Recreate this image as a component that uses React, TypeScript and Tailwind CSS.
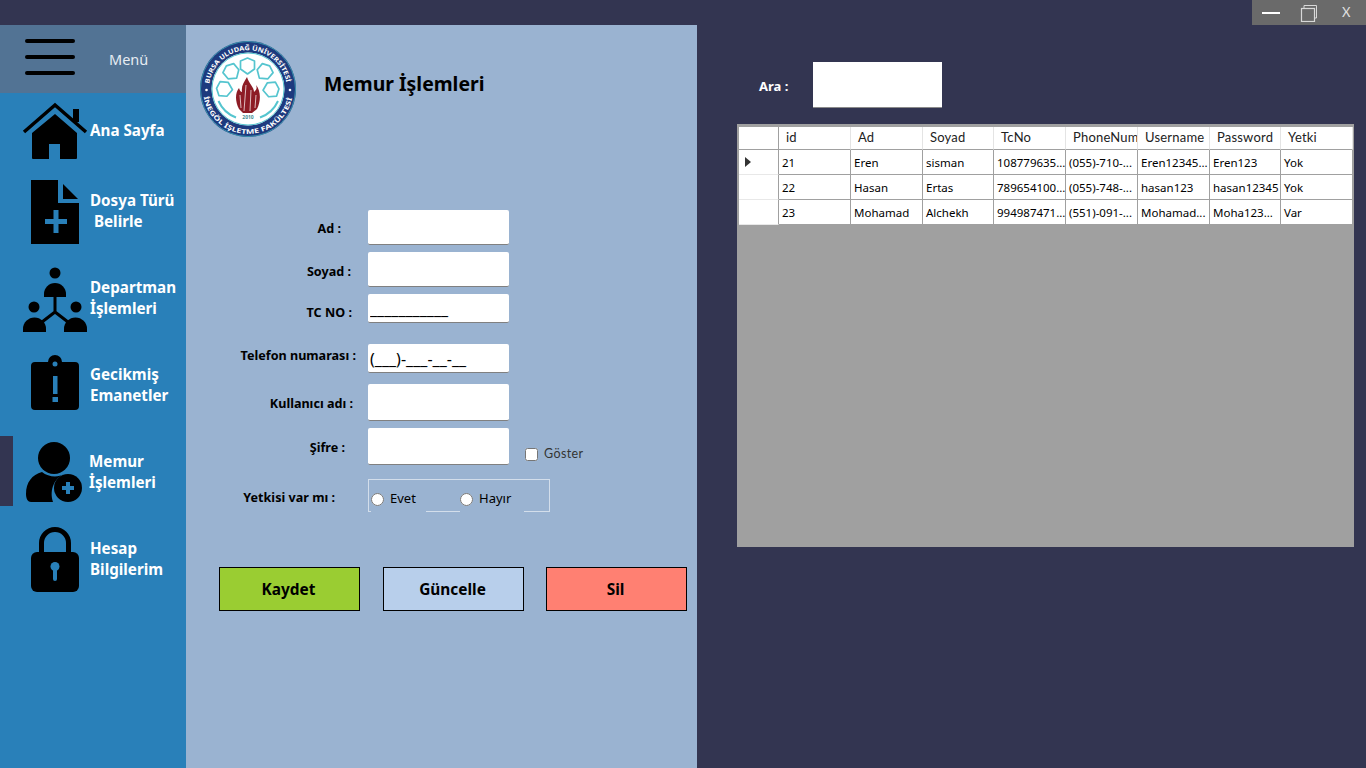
import React from "react";

const columns = ["id", "Ad", "Soyad", "TcNo", "PhoneNum", "Username", "Password", "Yetki"];

const rows = [
  ["21", "Eren", "sisman", "108779635...", "(055)-710-...", "Eren12345...", "Eren123", "Yok"],
  ["22", "Hasan", "Ertas", "789654100...", "(055)-748-...", "hasan123", "hasan12345", "Yok"],
  ["23", "Mohamad", "Alchekh", "994987471...", "(551)-091-...", "Mohamad...", "Moha123...", "Var"],
];

// x, y, rotation of the five shields round the flame in the logo
const shields = [
  [48.5, 25, 0],
  [32.5, 31, -40],
  [65.5, 31, 40],
  [25.5, 48, -85],
  [72, 48.5, 85],
];

function HomeIcon() {
  return (
    <svg width="90" height="70" viewBox="0 0 90 70" className="shrink-0">
      <path d="M24 36 55 9 86 36" fill="none" stroke="#000" strokeWidth="3.5" />
      <rect x="73" y="13" width="6" height="13" fill="#000" />
      <path d="M32 37 55 18 77 37V62a1 1 0 0 1-1 1H60V48H49V63H33a1 1 0 0 1-1-1Z" fill="#000" />
    </svg>
  );
}

function FileIcon() {
  return (
    <svg width="90" height="70" viewBox="0 0 90 70" className="shrink-0">
      <path d="M31 5H58V28H79V69H31Z" fill="#000" />
      <path d="M63 9 78 24H63Z" fill="#000" />
      <path d="M53.500 35h5v9h8.500v5h-8.500v9h-5v-9h-8.500v-5h8.500Z" fill="#2980b9" />
    </svg>
  );
}

function PeopleIcon() {
  return (
    <svg width="90" height="70" viewBox="0 0 90 70" className="shrink-0">
      <circle cx="55" cy="11" r="5.500" fill="#000" />
      <path d="M44 35V32a11 11 0 0 1 22 0V35Z" fill="#000" />
      <circle cx="34" cy="45" r="5.500" fill="#000" />
      <circle cx="76" cy="45" r="5.500" fill="#000" />
      <path d="M23 70V67a11.500 11.500 0 0 1 23 0V70Z" fill="#000" />
      <path d="M64 70V67a11.500 11.500 0 0 1 23 0V70Z" fill="#000" />
      <path d="M55 34V50M42 60 55 50 68 60" fill="none" stroke="#000" strokeWidth="3" />
    </svg>
  );
}

function NoticeIcon() {
  return (
    <svg width="90" height="70" viewBox="0 0 90 70" className="shrink-0">
      <path
        d="M35 13H48a7 7 0 0 1 14 0H75a4 4 0 0 1 4 4V57a4 4 0 0 1-4 4H35a4 4 0 0 1-4-4V17a4 4 0 0 1 4-4Z"
        fill="#000"
      />
      <circle cx="55" cy="15" r="2.500" fill="#2980b9" />
      <rect x="53" y="27" width="4.500" height="18" fill="#2980b9" />
      <rect x="52.500" y="48" width="5.500" height="5" fill="#2980b9" />
    </svg>
  );
}

function UserAddIcon() {
  return (
    <svg width="90" height="70" viewBox="0 0 90 70" className="shrink-0">
      <circle cx="54" cy="22" r="16" fill="#000" />
      <path d="M26 58C26 46 32 39 42 36 48 41 58 42 64 38 55 42 49 53 53 66H31C28 66 26 63 26 58Z" fill="#000" />
      <circle cx="68" cy="52" r="14" fill="#000" />
      <path d="M66 46h4v4h4v4h-4v4h-4v-4h-4v-4h4Z" fill="#2980b9" />
    </svg>
  );
}

function LockIcon() {
  return (
    <svg width="90" height="70" viewBox="0 0 90 70" className="shrink-0">
      <path d="M41.500 32V20a13.500 13.500 0 0 1 27 0V32" fill="none" stroke="#000" strokeWidth="5" />
      <rect x="31" y="29" width="48" height="40" rx="6" fill="#000" />
      <circle cx="55" cy="43.500" r="4.500" fill="#2980b9" />
      <path d="M53 45h4v11a2 2 0 0 1-4 0Z" fill="#2980b9" />
    </svg>
  );
}

function Logo() {
  return (
    <svg width="98" height="98" viewBox="0 0 98 98" className="shrink-0">
      <defs>
        <path id="logoTop" d="M10.400 42.600A39 39 0 0 1 87.600 42.600" />
        <path id="logoBottom" d="M4.700 55.800A45 45 0 0 0 93.300 55.800" />
      </defs>
      <circle cx="49" cy="48" r="48" fill="#1d3a7e" />
      <circle cx="49" cy="48" r="47.500" fill="none" stroke="#3fa7b8" strokeWidth="0.800" />
      <circle cx="49" cy="48" r="36.500" fill="#fff" />
      <circle cx="49" cy="48" r="36" fill="none" stroke="#55c5cf" strokeWidth="1" />
      <g fill="none" stroke="#55c5cf" strokeWidth="1.700" strokeLinejoin="round">
        {shields.map(([x, y, a]) => (
          <path key={a} transform={`translate(${x} ${y}) rotate(${a})`} d="M-7-5 0-8 7-5 7 3 0 8-7 3Z" />
        ))}
      </g>
      <path
        d="M48 36C50 43 55 46 55 51 58 48 58 47 57 44 62 50 62 60 58 68L53 72H44L40 68C36 60 36 52 40 47 41 50 42 51 43 51 42 45 45 41 48 36Z"
        fill="#8d1c25"
      />
      <path d="M47 44 45 70M52 49 51 70M41 54 42 67M57 54 56 67" stroke="#f3e5e5" strokeWidth="0.800" />
      <path d="M19.500 60A31 31 0 0 0 37 76.500M79 60A31 31 0 0 1 61 76.500" fill="none" stroke="#55c5cf" strokeWidth="2" />
      <text
        x="49"
        y="78"
        textAnchor="middle"
        fontSize="5"
        fontWeight="700"
        fill="#3f8a91"
        className="font-['Noto_Sans',sans-serif]"
      >
        2010
      </text>
      <text fontSize="6.400" fontWeight="700" fill="#fff" className="font-['Noto_Sans',sans-serif]">
        <textPath href="#logoTop" textLength="110" lengthAdjust="spacingAndGlyphs">
          BURSA ULUDAĞ ÜNİVERSİTESİ
        </textPath>
      </text>
      <text fontSize="6.400" fontWeight="700" fill="#fff" className="font-['Noto_Sans',sans-serif]">
        <textPath href="#logoBottom" textLength="124" lengthAdjust="spacingAndGlyphs">
          İNEGÖL İŞLETME FAKÜLTESİ
        </textPath>
      </text>
      <circle cx="7.500" cy="49" r="1.300" fill="#fff" />
      <circle cx="91" cy="49" r="1.300" fill="#fff" />
    </svg>
  );
}

function NavItem({
  icon,
  active,
  className,
  textClass,
  children,
}: {
  icon: React.ReactNode;
  active?: boolean;
  className?: string;
  textClass?: string;
  children: React.ReactNode;
}) {
  return (
    <div className={`relative flex h-[70px] items-center ${className ?? "mb-[17px]"}`}>
      {active && <span className="absolute left-0 top-0 h-full w-[13px] bg-[#333551]" />}
      {icon}
      <div className={`whitespace-pre text-[15.2px] font-bold leading-[21px] text-white ${textClass ?? "pt-[2px]"}`}>
        {children}
      </div>
    </div>
  );
}

function Sidebar() {
  return (
    <aside className="h-full w-[186px] shrink-0 bg-[#2980b9]">
      <div className="mb-[3px] flex h-[68px] items-center bg-[#527394]">
        <div className="mb-[4px] ml-[25px] flex w-[50px] flex-col gap-[12px]">
          <span className="h-[4px] rounded-full bg-black" />
          <span className="h-[4px] rounded-full bg-black" />
          <span className="h-[4px] rounded-full bg-black" />
        </div>
        <span className="ml-[34px] pt-[1px] text-[14.500px] text-[#e6ecf2]">Menü</span>
      </div>
      <NavItem icon={<HomeIcon />} className="mb-[9px]" textClass="pb-[2px]">
        Ana Sayfa
      </NavItem>
      <NavItem icon={<FileIcon />}>
        {"Dosya Türü\n Belirle"}
      </NavItem>
      <NavItem icon={<PeopleIcon />}>
        {"Departman\nİşlemleri"}
      </NavItem>
      <NavItem icon={<NoticeIcon />}>
        {"Gecikmiş\nEmanetler"}
      </NavItem>
      <NavItem icon={<UserAddIcon />} active>
        <span className="-ml-px block">{"Memur\nİşlemleri"}</span>
      </NavItem>
      <NavItem icon={<LockIcon />}>
        {"Hesap\nBilgilerim"}
      </NavItem>
    </aside>
  );
}

function FormRow({
  label,
  labelClass,
  inputClass,
  value,
  children,
}: {
  label: string;
  labelClass: string;
  inputClass: string;
  value?: string;
  children?: React.ReactNode;
}) {
  return (
    <div className="flex items-center">
      <label className={`w-[182px] text-right text-[12.600px] font-bold text-black ${labelClass}`}>{label}</label>
      <input
        readOnly
        value={value ?? ""}
        className={`w-[141px] rounded-[2px] border-b border-[#808080] bg-white px-[2px] text-[16px] text-black outline-none ${inputClass}`}
      />
      {children}
    </div>
  );
}

function MemurPanel() {
  return (
    <section className="h-full w-[511px] shrink-0 bg-[#9ab3d1]">
      <div className="flex items-start pl-[13px] pt-[16px]">
        <Logo />
        <h1 className="ml-[27px] mt-[28px] text-[19.400px] font-bold leading-[30px] text-black">Memur İşlemleri</h1>
      </div>

      <div className="mt-[71px] flex flex-col">
        <FormRow label="Ad :" labelClass="pr-[27px] pt-[3px]" inputClass="h-[35px]" />
        <FormRow label="Soyad :" labelClass="mt-[7px] pr-[17px] pt-[5px]" inputClass="mt-[7px] h-[35px]" />
        <FormRow label="TC NO :" labelClass="mt-[7px] pr-[16px] pt-[9px]" inputClass="mt-[7px] h-[29px] pt-[1px]" value="___________" />
        <FormRow label="Telefon numarası :" labelClass="mt-[21px] pb-[5px] pr-[12px]" inputClass="mt-[21px] h-[29px] pt-[1px]" value="(___)-___-__-__" />
        <FormRow label="Kullanıcı adı :" labelClass="mt-[11px] pr-[15px] pt-[3px]" inputClass="mt-[11px] h-[37px]" />
        <FormRow label="Şifre :" labelClass="mt-[7px] pr-[23px] pt-[3px]" inputClass="mt-[7px] h-[37px]">
          <label className="ml-[16px] mt-[23px] flex items-center gap-[6px] font-['Lato',sans-serif] text-[12.500px] tracking-[0.4px] text-[#333]">
            <input type="checkbox" className="m-0 h-[13px] w-[13px]" />
            Göster
          </label>
        </FormRow>
        <div className="mt-[14px] flex items-center">
          <label className="w-[182px] pr-[33px] pt-[5px] text-right text-[12.600px] font-bold text-black">
            Yetkisi var mı :
          </label>
          <div className="flex h-[33px] w-[182px] items-end border border-[#d3deeb] pl-[2px]">
            <label className="-mb-px flex h-[26px] w-[55px] items-center gap-[6px] bg-[#9ab3d1] text-[13px] text-black">
              <input type="radio" name="yetki" className="m-0 h-[13px] w-[13px]" />
              Evet
            </label>
            <label className="-mb-px ml-[34px] flex h-[26px] w-[64px] items-center gap-[6px] bg-[#9ab3d1] text-[13px] text-black">
              <input type="radio" name="yetki" className="m-0 h-[13px] w-[13px]" />
              Hayır
            </label>
          </div>
        </div>
      </div>

      <div className="ml-[33px] mt-[55px] flex gap-[23px] text-[15.400px] font-bold text-black">
        <button className="h-[44px] w-[141px] border border-black bg-[#9acd32] pr-[2px] pt-[1px]">Kaydet</button>
        <button className="h-[44px] w-[141px] border border-black bg-[#b8cfeb] pr-[2px] pt-[1px]">Güncelle</button>
        <button className="-ml-px h-[44px] w-[141px] border border-black bg-[#ff8072] pr-[2px] pt-[1px]">Sil</button>
      </div>
    </section>
  );
}

function DataGrid() {
  const cols = "grid-cols-[40px_72px_72px_71px_72px_72px_72px_71px_72px]";
  return (
    <div className="ml-[40px] h-[423px] w-[617px] border-[2px] border-t-[3px] border-[#a0a0a0] bg-[#a0a0a0]">
      <div className={`grid h-[23px] ${cols} bg-white font-['Lato',sans-serif] text-[13px] tracking-[0.2px] text-[#222]`}>
        <div className="border-b border-r border-[#a0a0a0]" />
        {columns.map((c) => (
          <div
            key={c}
            className="overflow-hidden whitespace-nowrap border-b border-r border-b-[#a0a0a0] border-r-[#e4e4e4] pl-[7px] leading-[21px]"
          >
            {c}
          </div>
        ))}
      </div>
      {rows.map((row, r) => (
        <div key={row[0]} className={`grid h-[25px] ${cols} bg-white text-[11.500px] text-black`}>
          <div className="flex items-center border-b border-r border-b-[#e8e8e8] border-r-[#a0a0a0] pl-[6px]">
            {r === 0 && <span className="h-0 w-0 border-y-[5px] border-l-[6px] border-y-transparent border-l-[#333]" />}
          </div>
          {row.map((cell, i) => (
            <div
              key={i}
              className="overflow-hidden whitespace-nowrap border-b border-r border-[#a0a0a0] pl-[3px] leading-[26px]"
            >
              {cell}
            </div>
          ))}
        </div>
      ))}
    </div>
  );
}

function RightPanel() {
  return (
    <section className="min-w-0 flex-1">
      <div className="flex items-center pl-[62px] pt-[37px]">
        <span className="w-[54px] pt-[4px] text-[13px] font-bold text-white">Ara :</span>
        <input readOnly className="h-[46px] w-[129px] border-b border-[#8a8a8a] bg-white outline-none" />
      </div>
      <div className="mt-[16px]">
        <DataGrid />
      </div>
    </section>
  );
}

export default function App() {
  return (
    <div className="flex h-[768px] w-[1366px] flex-col overflow-hidden bg-[#333551] font-['Noto_Sans',sans-serif]">
      <div className="flex h-[25px] shrink-0 justify-end">
        <div className="flex w-[114px] items-center bg-[#6a6a6a]">
          <span className="ml-[10px] h-[2px] w-[18px] bg-white" />
          <svg width="18" height="18" viewBox="0 0 18 18" className="ml-[20px]" fill="none" stroke="#d8d8d8">
            <rect x="1.500" y="4.500" width="13" height="13" strokeWidth="1.200" />
            <path d="M4 4V1.500H16.500V14H15" strokeWidth="1" />
          </svg>
          <span className="ml-[24px] font-['Lato',sans-serif] text-[13px] text-[#e0e0e0]">X</span>
        </div>
      </div>
      <div className="flex min-h-0 flex-1">
        <Sidebar />
        <MemurPanel />
        <RightPanel />
      </div>
    </div>
  );
}
